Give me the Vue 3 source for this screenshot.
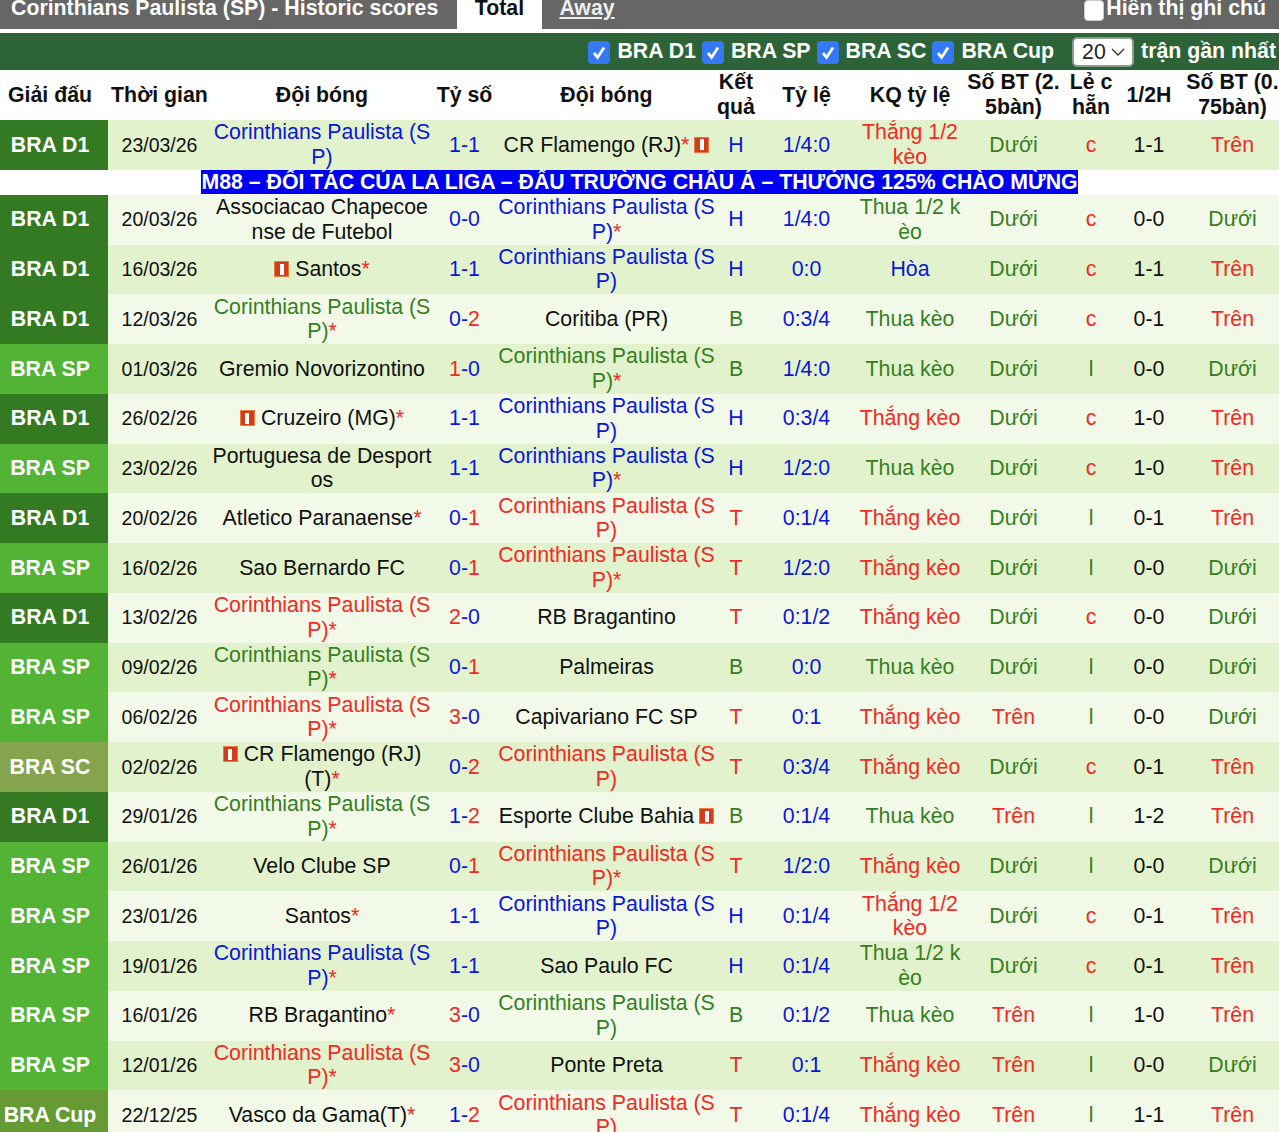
<script setup>
import { ref } from "vue";

const COR = "Corinthians Paulista (SP)";
const limit = ref("20");
const leagues = ["BRA D1", "BRA SP", "BRA SC", "BRA Cup"];
const headers = ["Giải đấu", "Thời gian", "Đội bóng", "Tỷ số", "Đội bóng", "Kết quả", "Tỷ lệ", "KQ tỷ lệ", "Số BT (2.5bàn)", "Lẻ c hẵn", "1/2H", "Số BT (0.75bàn)"];

// league, date, home, home goals, away goals, away, result, odds, odds result, goals, odd/even, half, goals 0.75
// a leading "!" on a team name means its card icon comes first, a trailing "!" means after
const rows = [
  ["BRA D1", "23/03/26", COR, 1, 1, "CR Flamengo (RJ)*!", "H", "1/4:0", "Thắng 1/2 kèo", "Dưới", "c", "1-1", "Trên"],
  ["BRA D1", "20/03/26", "Associacao Chapecoense de Futebol", 0, 0, COR + "*", "H", "1/4:0", "Thua 1/2 kèo", "Dưới", "c", "0-0", "Dưới"],
  ["BRA D1", "16/03/26", "!Santos*", 1, 1, COR, "H", "0:0", "Hòa", "Dưới", "c", "1-1", "Trên"],
  ["BRA D1", "12/03/26", COR + "*", 0, 2, "Coritiba (PR)", "B", "0:3/4", "Thua kèo", "Dưới", "c", "0-1", "Trên"],
  ["BRA SP", "01/03/26", "Gremio Novorizontino", 1, 0, COR + "*", "B", "1/4:0", "Thua kèo", "Dưới", "l", "0-0", "Dưới"],
  ["BRA D1", "26/02/26", "!Cruzeiro (MG)*", 1, 1, COR, "H", "0:3/4", "Thắng kèo", "Dưới", "c", "1-0", "Trên"],
  ["BRA SP", "23/02/26", "Portuguesa de Desportos", 1, 1, COR + "*", "H", "1/2:0", "Thua kèo", "Dưới", "c", "1-0", "Trên"],
  ["BRA D1", "20/02/26", "Atletico Paranaense*", 0, 1, COR, "T", "0:1/4", "Thắng kèo", "Dưới", "l", "0-1", "Trên"],
  ["BRA SP", "16/02/26", "Sao Bernardo FC", 0, 1, COR + "*", "T", "1/2:0", "Thắng kèo", "Dưới", "l", "0-0", "Dưới"],
  ["BRA D1", "13/02/26", COR + "*", 2, 0, "RB Bragantino", "T", "0:1/2", "Thắng kèo", "Dưới", "c", "0-0", "Dưới"],
  ["BRA SP", "09/02/26", COR + "*", 0, 1, "Palmeiras", "B", "0:0", "Thua kèo", "Dưới", "l", "0-0", "Dưới"],
  ["BRA SP", "06/02/26", COR + "*", 3, 0, "Capivariano FC SP", "T", "0:1", "Thắng kèo", "Trên", "l", "0-0", "Dưới"],
  ["BRA SC", "02/02/26", "!CR Flamengo (RJ)(T)*", 0, 2, COR, "T", "0:3/4", "Thắng kèo", "Dưới", "c", "0-1", "Trên"],
  ["BRA D1", "29/01/26", COR + "*", 1, 2, "Esporte Clube Bahia!", "B", "0:1/4", "Thua kèo", "Trên", "l", "1-2", "Trên"],
  ["BRA SP", "26/01/26", "Velo Clube SP", 0, 1, COR + "*", "T", "1/2:0", "Thắng kèo", "Dưới", "l", "0-0", "Dưới"],
  ["BRA SP", "23/01/26", "Santos*", 1, 1, COR, "H", "0:1/4", "Thắng 1/2 kèo", "Dưới", "c", "0-1", "Trên"],
  ["BRA SP", "19/01/26", COR + "*", 1, 1, "Sao Paulo FC", "H", "0:1/4", "Thua 1/2 kèo", "Dưới", "c", "0-1", "Trên"],
  ["BRA SP", "16/01/26", "RB Bragantino*", 3, 0, COR, "B", "0:1/2", "Thua kèo", "Trên", "l", "1-0", "Trên"],
  ["BRA SP", "12/01/26", COR + "*", 3, 0, "Ponte Preta", "T", "0:1", "Thắng kèo", "Trên", "l", "0-0", "Dưới"],
  ["BRA Cup", "22/12/25", "Vasco da Gama(T)*", 1, 2, COR, "T", "0:1/4", "Thắng kèo", "Trên", "l", "1-1", "Trên"],
].map((r) => ({
  league: r[0],
  date: r[1],
  home: parseTeam(r[2]),
  hs: r[3],
  as: r[4],
  away: parseTeam(r[5]),
  result: r[6],
  odds: r[7],
  oddsResult: r[8],
  goals: r[9],
  oe: r[10],
  half: r[11],
  goals2: r[12],
}));

function parseTeam(raw) {
  let name = raw;
  const before = name.startsWith("!");
  if (before) name = name.slice(1);
  const after = name.endsWith("!");
  if (after) name = name.slice(0, -1);
  const star = name.endsWith("*");
  if (star) name = name.slice(0, -1);
  return { name, star, before, after, isCor: name === COR };
}

const resultClass = { H: "blue", T: "red", B: "green" };

function leagueClass(l) {
  return "lg-" + l.split(" ")[1].toLowerCase();
}
function oddsClass(txt) {
  if (txt.startsWith("Thắng")) return "red";
  if (txt.startsWith("Thua")) return "green";
  return "blue";
}
function goalClass(txt) {
  return txt === "Trên" ? "red" : "green";
}
function scoreClass(a, b) {
  return a > b ? "red" : "blue";
}
</script>

<template>
  <div class="page">
    <div class="top-bar">
      <span class="title">Corinthians Paulista (SP) - Historic scores</span>
      <span class="tab active">Total</span>
      <a class="tab away">Away</a>
      <label class="note"><span class="note-box"></span>Hiển thị ghi chú</label>
    </div>

    <div class="filter-bar">
      <label v-for="l in leagues" :key="l" class="league-check">
        <span class="check">
          <svg viewBox="0 0 22 23" width="22" height="23">
            <path d="M6 12l3.6 4.4L16 6.5" fill="none" stroke="#fff" stroke-width="2.8" />
          </svg>
        </span>
        {{ l }}
      </label>
      <span class="select-wrap">
        <select v-model="limit">
          <option>10</option>
          <option>20</option>
          <option>30</option>
        </select>
        <svg class="chevron" viewBox="0 0 14 8" width="14" height="8">
          <path d="M1 1l6 6 6-6" fill="none" stroke="#333" stroke-width="1.3" />
        </svg>
      </span>
      <span class="recent">trận gần nhất</span>
    </div>

    <table class="scores">
      <colgroup>
        <col style="width: 108px" />
        <col style="width: 103px" />
        <col style="width: 222px" />
        <col style="width: 63px" />
        <col style="width: 221px" />
        <col style="width: 38px" />
        <col style="width: 103px" />
        <col style="width: 104px" />
        <col style="width: 103px" />
        <col style="width: 52px" />
        <col style="width: 64px" />
        <col style="width: 103px" />
      </colgroup>
      <thead>
        <tr>
          <th v-for="(h, i) in headers" :key="i" :class="{ first: i === 0 }">{{ h }}</th>
        </tr>
      </thead>
      <tbody>
        <template v-for="(r, i) in rows" :key="i">
          <tr :class="i % 2 === 0 ? 'dark' : 'light'">
            <td class="league" :class="leagueClass(r.league)">{{ r.league }}</td>
            <td class="date">{{ r.date }}</td>
            <td>
              <span v-if="r.home.before" class="card before"></span>
              <span :class="r.home.isCor ? resultClass[r.result] : ''">{{ r.home.name }}</span><span v-if="r.home.star" class="red">*</span>
            </td>
            <td>
              <span :class="scoreClass(r.hs, r.as)">{{ r.hs }}</span><span class="blue">-</span><span :class="scoreClass(r.as, r.hs)">{{ r.as }}</span>
            </td>
            <td>
              <span :class="r.away.isCor ? resultClass[r.result] : ''">{{ r.away.name }}</span><span v-if="r.away.star" class="red">*</span>
              <span v-if="r.away.after" class="card after"></span>
            </td>
            <td :class="resultClass[r.result]">{{ r.result }}</td>
            <td class="blue">{{ r.odds }}</td>
            <td :class="oddsClass(r.oddsResult)">{{ r.oddsResult }}</td>
            <td :class="goalClass(r.goals)">{{ r.goals }}</td>
            <td :class="r.oe === 'c' ? 'red' : 'green'">{{ r.oe }}</td>
            <td>{{ r.half }}</td>
            <td :class="goalClass(r.goals2)">{{ r.goals2 }}</td>
          </tr>
          <tr v-if="i === 0" class="ad-row">
            <td colspan="12">
              <span class="ad">M88 – ĐỐI TÁC CỦA LA LIGA – ĐẤU TRƯỜNG CHÂU Á – THƯỞNG 125% CHÀO MỪNG</span>
            </td>
          </tr>
        </template>
      </tbody>
    </table>
  </div>
</template>

<style>
html,
body {
  margin: 0;
  background: #fff;
}
</style>

<style scoped>
.page {
  width: 1279px;
  height: 1132px;
  overflow: hidden;
  font-family: "Liberation Sans", Arial, sans-serif;
  font-size: 21.3px;
  color: #111;
}

.top-bar {
  display: flex;
  height: 29px;
  background: #666;
  color: #fff;
  font-weight: bold;
  line-height: 16px;
}
.title {
  padding-left: 11px;
  width: 446px;
}
.tab {
  width: 85px;
  height: 32px;
  text-align: center;
}
.tab.active {
  background: #fff;
  color: #111;
}
.tab.away {
  margin-left: 1px;
  width: 88px;
  color: #eee;
  text-decoration: underline;
}
.note {
  margin-left: auto;
  display: flex;
  padding-right: 13px;
}
.note-box {
  width: 20px;
  height: 21px;
  margin-right: 2px;
  background: #fff;
  border-radius: 4px;
  border: 1px solid #ccc;
  box-sizing: border-box;
}

.filter-bar {
  display: flex;
  align-items: center;
  justify-content: flex-end;
  height: 37px;
  margin-top: 4px;
  padding-right: 3px;
  background: #2c6437;
  color: #fff;
  font-weight: bold;
}
.league-check {
  display: flex;
  align-items: center;
  gap: 7px;
  margin-right: 6px;
}
.check {
  display: block;
  width: 22px;
  height: 23px;
  margin-top: 2px;
  background: #3478f6;
  border-radius: 4px;
}
.check svg {
  display: block;
}
.select-wrap {
  position: relative;
  display: block;
  height: 30px;
  margin-left: 12px;
  margin-right: 7px;
}
select {
  appearance: none;
  display: block;
  width: 62px;
  height: 30px;
  box-sizing: border-box;
  padding: 0 0 0 8px;
  background: #fff;
  color: #222;
  border: 2px solid #8a9a8e;
  border-radius: 5px;
  font-family: inherit;
  font-size: 21.3px;
}
.chevron {
  position: absolute;
  right: 9px;
  top: 11px;
  pointer-events: none;
}

.scores {
  width: 1284px;
  table-layout: fixed;
  border-collapse: collapse;
  word-break: break-all;
}
th {
  height: 50px;
  padding: 0;
  font-weight: bold;
  line-height: 25px;
  color: #111;
}
th.first {
  padding-right: 8px;
}
td {
  height: 49.75px;
  padding: 0;
  box-sizing: border-box;
  text-align: center;
  line-height: 24.5px;
  overflow: hidden;
}
tr.dark td {
  background: #e2f2cd;
}
tr.light td {
  background: #f2f9e8;
}
td.date {
  font-size: 19.5px;
}
tr td.league {
  padding: 0 8px 0 0;
  color: #fff;
  font-weight: bold;
}
tr td.lg-d1 {
  background: #347a22;
}
tr td.lg-sp {
  background: #52b335;
}
tr td.lg-sc {
  background: #84a44d;
}
tr td.lg-cup {
  background: #669a32;
}
tr.ad-row td {
  height: 25px;
  line-height: 24px;
  padding: 0 5px 0 0;
  background: #fff;
  font-weight: bold;
}
.ad {
  display: inline-block;
  background: #0000f0;
  color: #fff;
}

.red {
  color: #f02a24;
}
.blue {
  color: #0a17d8;
}
.green {
  color: #35801f;
}
.card {
  display: inline-block;
  width: 15px;
  height: 16px;
  vertical-align: -1px;
  box-sizing: border-box;
  border: 1px solid #ea7a3e;
  background: linear-gradient(#fff, #fff) center / 4px 11px no-repeat, #cf3d1c;
}
.card.before {
  margin-right: 6px;
}
.card.after {
  margin-left: 5px;
}
</style>
